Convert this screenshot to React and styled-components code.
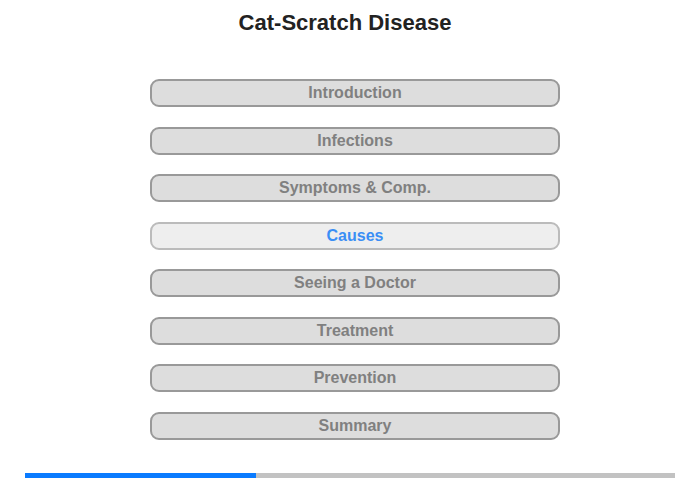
import React from 'react'
import styled, { createGlobalStyle } from 'styled-components'

const GlobalStyle = createGlobalStyle`
    html, body {
        margin: 0;
        padding: 0;
        background: #fff;
        font-family: "Liberation Sans", Arial, sans-serif;
    }
`

const Page = styled.div`
    width: 700px;
    height: 480px;
    display: flex;
    flex-direction: column;
    align-items: center;
    box-sizing: border-box;
    padding-top: 10px;
`

const Title = styled.h1`
    margin: 0 10px 0 0;
    font-size: 22px;
    line-height: 25px;
    font-weight: bold;
    color: #222;
`

const Menu = styled.nav`
    align-self: flex-start;
    margin: 44px 0 0 150px;
    display: flex;
    flex-direction: column;
    gap: 19.5px;
    width: 410px;
`

const MenuButton = styled.div`
    box-sizing: border-box;
    height: 28px;
    border: 2px solid ${ props => props.active ? '#bbb' : '#999' };
    border-radius: 9px;
    background: ${ props => props.active ? '#eee' : '#ddd' };
    color: ${ props => props.active ? '#3b8ef5' : '#808080' };
    font-size: 16px;
    font-weight: bold;
    display: flex;
    align-items: center;
    justify-content: center;
    cursor: pointer;
`

const Progress = styled.div`
    margin-top: 33px;
    width: 650px;
    height: 5px;
    background: #c2c2c2;
    display: flex;
`

const ProgressFill = styled.div`
    background: #0a7bff;
    height: 100%;
`

const sections = [
    'Introduction',
    'Infections',
    'Symptoms & Comp.',
    'Causes',
    'Seeing a Doctor',
    'Treatment',
    'Prevention',
    'Summary',
]

const App = () => {
    const current = 3
    const progress = 231 / 650 * 100

    return (
        <>
            <GlobalStyle />
            <Page>
                <Title>Cat-Scratch Disease</Title>
                <Menu>
                    { sections.map( ( label , index ) => (
                        <MenuButton key={index} active={index === current}>
                            { label }
                        </MenuButton>
                    ))}
                </Menu>
                <Progress>
                    <ProgressFill style={{ width: progress + '%' }} />
                </Progress>
            </Page>
        </>
    )
}

export default App
